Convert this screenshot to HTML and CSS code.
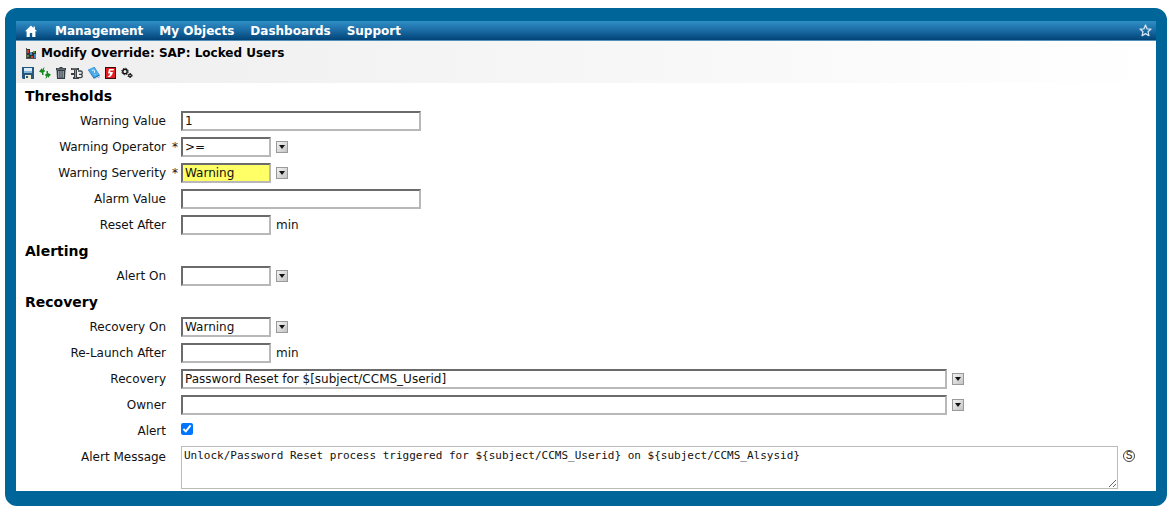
FILE: index.html
```html
<!DOCTYPE html>
<html lang="en">
<head>
<meta charset="UTF-8">
<title>Modify Override: SAP: Locked Users</title>
<meta name="viewport" content="width=device-width, initial-scale=1">
<link rel="stylesheet" href="styles.css">
</head>
<body>

<div class="window">
    <nav class="menubar">
        <a class="home" href="#" aria-label="Home">
            <svg width="12" height="12" viewBox="0 0 12 12"><path fill="#fff" d="M6 0.5 0 6.2h1.6V12h3.2V8h2.4v4h3.2V6.2H12L9.9 4.2V1.4H8.5v1.5z"/></svg>
        </a>
        <a href="#">Management</a>
        <a href="#">My Objects</a>
        <a href="#">Dashboards</a>
        <a href="#">Support</a>
        <a class="favorite" href="#" aria-label="Add to favorites">
            <svg width="13" height="13" viewBox="0 0 13 13"><path fill="none" stroke="#d5e6f3" stroke-width="1.3" stroke-linejoin="round" d="M6.5 1 8 4.8l4 .3-3 2.6.9 4-3.4-2.1-3.4 2.1.9-4-3-2.6 4-.3z"/></svg>
        </a>
    </nav>

    <header class="page-header">
        <div class="title">
            <svg width="10" height="11" viewBox="0 0 10 11">
                <path fill="#555" d="M0 0h1v10h9v1H0z"/>
                <path fill="#333" d="M1 1h3v9H1zM4 4h3v6H4zM7 3h3v7H7z"/>
                <path fill="#d8392b" d="M1 2h2v3H1zM5 8h2v2H5z"/>
                <path fill="#3f8fc6" d="M4 4h2v3H4zM8 6h2v4H8z"/>
                <path fill="#4a9a3c" d="M1 7h2v2H1zM7 3h2v2H7z"/>
            </svg>
            <h1>Modify Override: SAP: Locked Users</h1>
        </div>
        <div class="toolbar">
            <button type="button" title="Save">
                <svg width="12" height="12" viewBox="0 0 12 12">
                    <path fill="#27567c" d="M0 0h12v12H1L0 11z"/>
                    <path fill="#d9ecf8" d="M2 1h8v5H2z"/>
                    <path fill="#87b5d3" d="M2 4h8v2H2z"/>
                    <path fill="#f1efd0" d="M3 8h6v4H3z"/>
                    <path fill="#27567c" d="M4 9h2v2H4z"/>
                </svg>
            </button>
            <button type="button" title="Refresh">
                <svg width="12" height="12" viewBox="0 0 12 12">
                    <path fill="#188a22" d="M0 4.5 3 1v2Q4 1 5.600 0 4.800 2 4.800 3.300H6L5.500 5H4.500v3H3V6z"/>
                    <path fill="#188a22" d="M12 7.500 9 11V9Q8 11 6.400 12 7.200 10 7.200 8.700H6L6.500 7h1V4H9v2z"/>
                </svg>
            </button>
            <button type="button" title="Delete">
                <svg width="10" height="12" viewBox="1 0 10 12">
                    <path fill="#323b42" d="M4.5 0h3v1H11v2h-.5L10 12H2l-.5-9H1V1h3.5z"/>
                    <path fill="#8f9aa1" d="M3 4h1.500v6.800H3zM5.300 4h1.400v6.800H5.300zM7.500 4H9v6.800H7.500zM2 1.700h8v.7H2z"/>
                </svg>
            </button>
            <button type="button" title="Threshold settings">
                <svg width="12" height="12" viewBox="0 0 12 12">
                    <path fill="#3b4143" d="M0 1h8v2H6v7h2v2H2v-2h1V8H0V6h3V3H0z"/>
                    <path fill="#8d9a9b" d="M4 3h1v8H4zM1 1.500h5v.7H1z"/>
                    <path fill="none" stroke="#3b4143" stroke-width="1.300" d="M7 4h2.500q1.800 0 1.800 1.700T9.500 7.300H8M9.500 7.300q1.800 0 1.800 1.700T9.500 10.700H8"/>
                </svg>
            </button>
            <button type="button" title="Help">
                <svg width="12" height="12" viewBox="0 0 12 12">
                    <path fill="#1769a8" d="M0 3 6.500 0 12 8.500V10L6 12z"/>
                    <path fill="#4cabea" d="M0 2.500 6 0l5.500 7.500L6 10.500z"/>
                    <path fill="#eef8ff" d="m6 11.500 6-3v1L6.500 12z"/>
                    <path fill="none" stroke="#e3f5ff" d="M4 3.500q2.500-1.500 2.500.3T6.300 6M7 7.300l.6.6"/>
                </svg>
            </button>
            <button type="button" title="Disable">
                <svg width="11" height="12" viewBox="0 0 11 12">
                    <path fill="#380d0d" d="M0 0h11v12H0z"/>
                    <path fill="#e51c20" d="M1 1h9v10H1z"/>
                    <path fill="#fff" d="M4 2h5L8.500 3.500H5.500L5.200 5H8L7 8 5 10H2.500L4.500 8 5.200 6.500H3z"/>
                </svg>
            </button>
            <button type="button" title="Process">
                <svg width="12" height="12" viewBox="0 0 12 12">
                    <circle cx="4" cy="4.500" r="2.200" fill="none" stroke="#111" stroke-width="1.400"/>
                    <circle cx="4" cy="4.500" r="3.300" fill="none" stroke="#111" stroke-width="1" stroke-dasharray="1.300"/>
                    <circle cx="9" cy="8.500" r="1.300" fill="none" stroke="#111" stroke-width="1.200"/>
                    <circle cx="9" cy="8.500" r="2.100" fill="none" stroke="#111" stroke-width="1" stroke-dasharray="1.100"/>
                </svg>
            </button>
        </div>
    </header>

    <form class="form">
        <h2>Thresholds</h2>
        <div class="row">
            <label for="warningValue">Warning Value</label>
            <div class="field"><input type="text" class="medium" id="warningValue" value="1"></div>
        </div>
        <div class="row">
            <label class="required" for="warningOperator">Warning Operator</label>
            <div class="field">
                <select id="warningOperator"><option>&gt;=</option></select>
                <button type="button" class="drop" aria-label="Choose operator"></button>
            </div>
        </div>
        <div class="row">
            <label class="required" for="warningSeverity">Warning Serverity</label>
            <div class="field">
                <select id="warningSeverity" class="warning"><option>Warning</option></select>
                <button type="button" class="drop" aria-label="Choose severity"></button>
            </div>
        </div>
        <div class="row">
            <label for="alarmValue">Alarm Value</label>
            <div class="field"><input type="text" class="medium" id="alarmValue"></div>
        </div>
        <div class="row">
            <label for="resetAfter">Reset After</label>
            <div class="field"><input type="text" id="resetAfter"><span>min</span></div>
        </div>

        <h2>Alerting</h2>
        <div class="row">
            <label for="alertOn">Alert On</label>
            <div class="field">
                <select id="alertOn"><option></option></select>
                <button type="button" class="drop" aria-label="Choose alert state"></button>
            </div>
        </div>

        <h2>Recovery</h2>
        <div class="row">
            <label for="recoveryOn">Recovery On</label>
            <div class="field">
                <select id="recoveryOn"><option>Warning</option></select>
                <button type="button" class="drop" aria-label="Choose recovery state"></button>
            </div>
        </div>
        <div class="row">
            <label for="relaunchAfter">Re-Launch After</label>
            <div class="field"><input type="text" id="relaunchAfter"><span>min</span></div>
        </div>
        <div class="row">
            <label for="recovery">Recovery</label>
            <div class="field wide">
                <select id="recovery"><option>Password Reset for $[subject/CCMS_Userid]</option></select>
                <button type="button" class="drop" aria-label="Choose recovery"></button>
            </div>
        </div>
        <div class="row">
            <label for="owner">Owner</label>
            <div class="field wide">
                <select id="owner"><option></option></select>
                <button type="button" class="drop" aria-label="Choose owner"></button>
            </div>
        </div>
        <div class="row">
            <label for="alert">Alert</label>
            <div class="field check"><input type="checkbox" id="alert" checked></div>
        </div>
        <div class="row message">
            <label for="alertMessage">Alert Message</label>
            <div class="field">
                <textarea id="alertMessage">Unlock/Password Reset process triggered for ${subject/CCMS_Userid} on ${subject/CCMS_Alsysid}</textarea>
                <button type="button" class="variable" title="Insert variable">S</button>
            </div>
        </div>
    </form>
</div>

</body>
</html>
```

FILE: styles.css
```css
* {
  box-sizing: border-box;
}
body {
  margin: 0;
  padding: 8px 8px 8px 5px;
  background-color: #fff;
  color: #111;
  font-family: Verdana, "DejaVu Sans", sans-serif;
  font-size: 12px;
}
.window {
  background-color: #fff;
  border: 11px solid #006699;
  border-width: 13px 11px 15px;
  border-radius: 12px;
}

/* top menu */
.menubar {
  display: flex;
  align-items: center;
  gap: 16px;
  height: 20px;
  padding: 0 4px 0 9px;
  background: linear-gradient(#2f8fc4, #1b6ba5 50%, #004477);
  border-bottom: 1px solid #5590b8;
}
.menubar a {
  color: #fff;
  font-weight: bold;
  text-decoration: none;
}
.menubar svg {
  display: block;
}
.menubar .home {
  width: 14px;
}
.menubar .favorite {
  margin-left: auto;
}

/* title and tools */
.page-header {
  height: 42px;
  padding: 4px 6px 0;
  background: linear-gradient(to right, #eeeeee, #ffffff);
}
.title {
  display: flex;
  align-items: center;
  gap: 5px;
  padding-left: 4px;
}
h1 {
  margin: 0;
  color: #000;
  font-size: 12px;
  line-height: 16px;
}
.toolbar {
  display: flex;
  gap: 5px;
  padding-top: 6px;
}
.toolbar button {
  padding: 0;
  border: none;
  background: none;
  cursor: pointer;
}
.toolbar svg {
  display: block;
}

/* form */
h2 {
  height: 25px;
  margin: 0;
  padding-left: 9px;
  color: #000;
  font-size: 14px;
  line-height: 26px;
}
.row {
  display: grid;
  grid-template-columns: 150px minmax(0, 1fr);
  column-gap: 15px;
  height: 26px;
}
.row label {
  line-height: 26px;
  text-align: right;
  white-space: nowrap;
}
.required::after {
  content: "*";
  display: inline-block;
  width: 8px;
  margin-right: -12px;
  padding-left: 4px;
}
.field {
  display: flex;
  align-items: center;
  gap: 5px;
}
input[type="text"], select {
  width: 90px;
  height: 20px;
  margin: 0;
  padding: 0 2px;
  border: 2px solid;
  border-color: #6b6b6b #b8b8b8 #b8b8b8 #6b6b6b;
  border-radius: 0;
  background-color: #fff;
  color: #111;
  font: inherit;
  appearance: none;
}
input.medium {
  width: 240px;
}
select.warning {
  background-color: #ffff66;
}
.wide {
  padding-right: 192px;
}
.wide select {
  flex: 1;
}
.drop {
  display: flex;
  align-items: center;
  justify-content: center;
  width: 12px;
  height: 12px;
  padding: 0;
  border: 1px solid #999;
  background: linear-gradient(135deg, #f2f2f2, #c4c4c4);
}
.drop::before {
  content: "";
  border: 3px solid transparent;
  border-top: 4px solid #111;
  border-bottom: none;
}
.check {
  align-items: flex-start;
  padding-top: 5px;
}
input[type="checkbox"] {
  width: 12px;
  height: 12px;
  margin: 0;
  accent-color: #0075ff;
}
.message {
  height: 47px;
}
.message .field {
  align-items: flex-start;
  padding: 2px 21px 0 0;
}
textarea {
  flex: 1;
  height: 43px;
  margin: 0;
  padding: 2px;
  border: 1px solid #bbb;
  color: #111;
  font-family: "DejaVu Sans Mono", monospace;
  font-size: 11px;
  line-height: 13px;
}
.variable {
  width: 12px;
  height: 12px;
  margin-top: 4px;
  padding: 0;
  border: 1px solid #444;
  border-radius: 50%;
  background: none;
  color: #222;
  font-family: "Liberation Sans", sans-serif;
  font-size: 10px;
  line-height: 10px;
}
```
